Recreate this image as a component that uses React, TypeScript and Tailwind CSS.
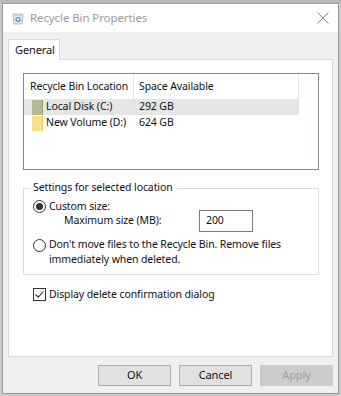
import React from "react";

const font = { fontFamily: '"Noto Sans", "Open Sans", sans-serif', letterSpacing: "-0.1px" };

const BinIcon = () => (
  <svg width="12" height="13" viewBox="0 0 12 13">
    <path d="M1 2 L11 2 L10 12 L2 12 Z" fill="#dfe6ec" stroke="#9fb0bf" strokeWidth="0.8" />
    <path d="M1 2 L11 2 L10.7 4 L1.3 4 Z" fill="#c4d0da" />
    <circle cx="6" cy="7.5" r="2" fill="none" stroke="#3b8fd0" strokeWidth="1.2" />
  </svg>
);

const Radio = ({ checked }: { checked?: boolean }) => (
  <span className="w-[13px] h-[13px] rounded-full border border-[#333] bg-white flex items-center justify-center shrink-0">
    {checked && <span className="w-[7px] h-[7px] rounded-full bg-[#333]" />}
  </span>
);

const drives = [
  { name: "Local Disk (C:)", space: "292 GB", color: "bg-[#b3ba92]", edge: "border-r-[#9aa07a]", sel: true },
  { name: "New Volume (D:)", space: "624 GB", color: "bg-[#f7df8c]", edge: "border-r-[#e8c860]", sel: false },
];

export default function App() {
  return (
    <div className="w-[341px] h-[396px] bg-[#c9c9c9] overflow-hidden" style={font}>
      <div className="h-[3px] bg-[#b9b9b9]" />
      <div className="ml-[2px] w-[337px] h-[391px] border border-[#9a9a9a] bg-[#f0f0f0] flex flex-col text-[10.5px] text-[#111] whitespace-nowrap">
        {/* title bar */}
        <div className="h-[28px] bg-white flex items-center shrink-0">
          <div className="ml-[9px] mr-[6px] flex items-center">
            <BinIcon />
          </div>
          <span className="text-[11.5px] text-[#9a9a9a]">Recycle Bin Properties</span>
          <svg className="ml-auto mr-[9px]" width="12" height="12" viewBox="0 0 12 12">
            <path d="M0.5 0.5 L11.5 11.5 M11.5 0.5 L0.5 11.5" stroke="#8a8a8a" strokeWidth="1" />
          </svg>
        </div>

        {/* tabs */}
        <div className="pl-[5px] pr-[5px] pt-[7px] flex flex-col flex-1">
          <div className="flex">
            <div className="h-[21px] w-[52px] border border-b-0 border-[#d9d9d9] bg-white flex items-center pl-[6px] text-[11px] -mb-px relative z-10">
              General
            </div>
          </div>
          <div className="h-[298px] border border-[#d9d9d9] bg-white pt-[13px] pl-[14px]">
            {/* list view */}
            <div className="w-[296px] h-[97px] border border-[#828790] flex flex-col">
              <div className="h-[25px] flex items-center shrink-0">
                <div className="w-[110px] h-full flex items-center pl-[6px] border-r border-[#e5e5e5]">
                  Recycle Bin Location
                </div>
                <div className="w-[165px] h-full flex items-center pl-[5px] border-r border-[#e5e5e5]">
                  Space Available
                </div>
              </div>
              {drives.map((d) => (
                <div key={d.name} className="flex items-center h-[16px]">
                  <div className={`w-[275px] h-full flex items-center ${d.sel ? "bg-[#e5e5e5]" : ""}`}>
                    <div className="w-[110px] flex items-center pl-[8px]">
                      <span className={`w-[11px] h-[15px] ${d.color} border-r ${d.edge} mr-[3px]`} />
                      {d.name}
                    </div>
                    <div className="pl-[5px]">{d.space}</div>
                  </div>
                </div>
              ))}
            </div>

            {/* group box */}
            <div className="w-[296px] h-[87px] mt-[18px] border border-[#dcdcdc] relative pt-[10px] pl-[9px]">
              <span className="absolute -top-[9px] left-[7px] bg-white px-[2px]">
                Settings for selected location
              </span>
              <div className="flex items-center gap-[3px]">
                <Radio checked />
                <span>Custom size:</span>
              </div>
              <div className="flex items-center -mt-[5px]">
                <span className="ml-[31px] w-[135px]">Maximum size (MB):</span>
                <div className="w-[54px] h-[22px] border border-[#7a7a7a] flex items-center pl-[6px]">200</div>
              </div>
              <div className="flex items-start gap-[3px] mt-[5px]">
                <div className="mt-[2px]">
                  <Radio />
                </div>
                <span className="leading-[15px]">
                  Don't move files to the Recycle Bin. Remove files
                  <br />
                  immediately when deleted.
                </span>
              </div>
            </div>

            {/* checkbox */}
            <div className="flex items-center gap-[3px] mt-[12px] ml-[10px]">
              <span className="w-[13px] h-[13px] border border-[#333] bg-white flex items-center justify-center">
                <svg width="11" height="11" viewBox="0 0 11 11">
                  <path d="M1.5 5.5 L4.2 8.2 L9.5 2.5" fill="none" stroke="#333" strokeWidth="1.1" />
                </svg>
              </span>
              <span>Display delete confirmation dialog</span>
            </div>
          </div>

          {/* buttons */}
          <div className="flex justify-end gap-[8px] mt-[8px] pr-0">
            <button className="w-[73px] h-[21px] border border-[#adadad] bg-[#e1e1e1] text-[11px]">OK</button>
            <button className="w-[73px] h-[21px] border border-[#adadad] bg-[#e1e1e1] text-[11px]">Cancel</button>
            <button className="w-[73px] h-[21px] border border-[#cccccc] bg-[#cccccc] text-[11px] text-[#a0a0a0]">Apply</button>
          </div>
        </div>
      </div>
    </div>
  );
}
